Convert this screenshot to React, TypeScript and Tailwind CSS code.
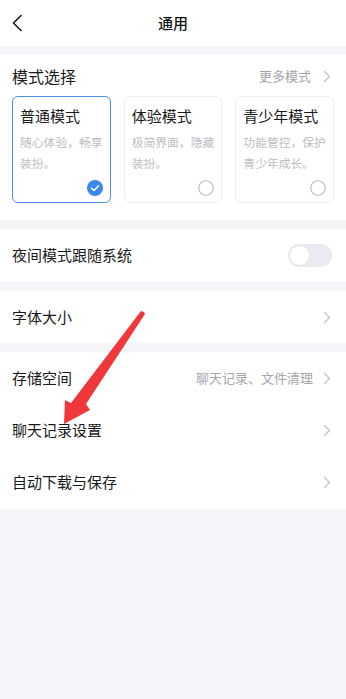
import React from 'react';

const FONT = { fontFamily: '"Noto Sans CJK SC", "Noto Sans", sans-serif' };

function Chevron() {
  return (
    <svg width="8" height="13" viewBox="0 0 8 13" className="shrink-0">
      <path d="M1.5 1.5 L6.5 6.5 L1.5 11.5" fill="none" stroke="#c4c6cc" strokeWidth="1.4" strokeLinecap="round" strokeLinejoin="round" />
    </svg>
  );
}

const MODES = [
  { title: '普通模式', desc: '随心体验，畅享装扮。', on: true },
  { title: '体验模式', desc: '极简界面，隐藏装扮。', on: false },
  { title: '青少年模式', desc: '功能管控，保护青少年成长。', on: false },
];

function Row({ label, value }: { label: string; value?: string }) {
  return (
    <div className="h-[52px] flex items-center justify-between pl-3 pr-[15px]">
      <span className="text-[15px] text-[#1a1a1a]">{label}</span>
      <div className="flex items-center gap-[10px]">
        {value && <span className="text-[13px] text-[#a3a5ab]">{value}</span>}
        <Chevron />
      </div>
    </div>
  );
}

export default function App() {
  return (
    <div className="relative w-[346px] h-[699px] bg-[#f4f5f9] overflow-hidden" style={FONT}>
      {/* header */}
      <div className="h-[46px] bg-white flex items-center justify-center relative">
        <svg width="12" height="18" viewBox="0 0 12 18" className="absolute left-[11px] top-[14px]">
          <path d="M10 1.5 L2.5 9 L10 16.5" fill="none" stroke="#1a1a1a" strokeWidth="1.6" strokeLinecap="round" strokeLinejoin="round" />
        </svg>
        <span className="text-[15px] font-medium text-[#111]">通用</span>
      </div>

      {/* mode select */}
      <div className="mt-2 bg-white px-3 pt-[9px] pb-[17px]">
        <div className="flex items-center justify-between h-[26px]">
          <span className="text-[16px] text-[#1a1a1a]">模式选择</span>
          <div className="flex items-center gap-[12px] pr-[3px]">
            <span className="text-[13px] text-[#a3a5ab]">更多模式</span>
            <Chevron />
          </div>
        </div>
        <div className="mt-[7px] grid grid-cols-3 gap-[13px]">
          {MODES.map((m) => (
            <div
              key={m.title}
              className={
                'relative h-[107px] rounded-[6px] border px-[7px] pt-[8px] ' +
                (m.on ? 'border-[#4a8fe8]' : 'border-[#eeeff2]')
              }
            >
              <div className="text-[15px] leading-[22px] text-[#1a1a1a] whitespace-nowrap">{m.title}</div>
              <div className="mt-[4px] text-[11.8px] leading-[21px] text-[#bcbec4]">{m.desc}</div>
              {m.on ? (
                <svg width="16" height="16" viewBox="0 0 16 16" className="absolute right-[7px] bottom-[6px]">
                  <circle cx="8" cy="8" r="8" fill="#3e88ea" />
                  <path d="M4.6 8.2 L7 10.5 L11.4 5.9" fill="none" stroke="#fff" strokeWidth="1.5" strokeLinecap="round" strokeLinejoin="round" />
                </svg>
              ) : (
                <svg width="16" height="16" viewBox="0 0 16 16" className="absolute right-[7px] bottom-[6px]">
                  <circle cx="8" cy="8" r="7.3" fill="none" stroke="#b9bbc1" strokeWidth="1.1" />
                </svg>
              )}
            </div>
          ))}
        </div>
      </div>

      {/* night mode */}
      <div className="mt-[9px] bg-white h-[53px] flex items-center justify-between pl-3 pr-[14px]">
        <span className="text-[15px] text-[#1a1a1a]">夜间模式跟随系统</span>
        <div className="w-[44px] h-[23px] rounded-full bg-[#e9ebf0] flex items-center px-[2px]">
          <div className="w-[19px] h-[19px] rounded-full bg-white shadow-[0_0_2px_rgba(0,0,0,0.08)]" />
        </div>
      </div>

      {/* font size */}
      <div className="mt-[9px] bg-white">
        <Row label="字体大小" />
      </div>

      {/* storage group */}
      <div className="mt-[9px] bg-white pb-[1px]">
        <Row label="存储空间" value="聊天记录、文件清理" />
        <Row label="聊天记录设置" />
        <Row label="自动下载与保存" />
      </div>

      {/* red annotation arrow */}
      <svg className="absolute left-0 top-0 pointer-events-none" width="346" height="699" viewBox="0 0 346 699">
        <path
          d="M144 312 L145 314 L86 404 L90 410 L64 424 L65 400 L71 403 L141 311 Z"
          fill="#f0383a"
        />
      </svg>
    </div>
  );
}
